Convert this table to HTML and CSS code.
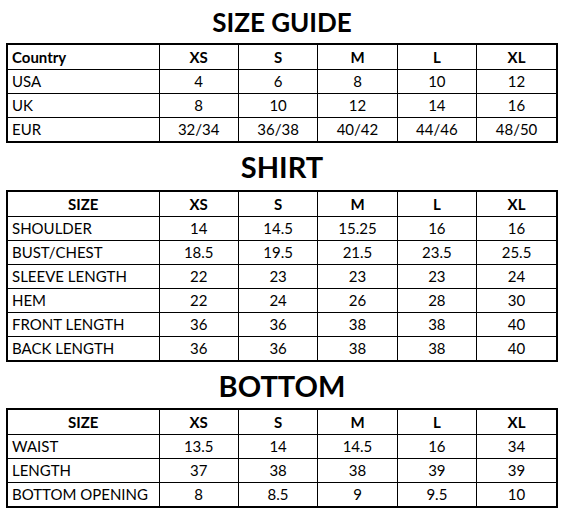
FILE: index.html
```html
<!DOCTYPE html>
<html>
<head>
<meta charset="utf-8">
<title>Size Guide</title>
<link rel="stylesheet" href="styles.css">
</head>
<body>
<div class="page">
  <h1 class="title title-first">SIZE GUIDE</h1>
  <div class="frame">
    <table class="grid">
      <colgroup><col class="c-label"><col><col><col><col><col></colgroup>
      <tr class="head"><th class="label">Country</th><th>XS</th><th>S</th><th>M</th><th>L</th><th>XL</th></tr>
      <tr><td class="label">USA</td><td>4</td><td>6</td><td>8</td><td>10</td><td>12</td></tr>
      <tr><td class="label">UK</td><td>8</td><td>10</td><td>12</td><td>14</td><td>16</td></tr>
      <tr><td class="label">EUR</td><td>32/34</td><td>36/38</td><td>40/42</td><td>44/46</td><td>48/50</td></tr>
    </table>
  </div>

  <h1 class="title title-second">SHIRT</h1>
  <div class="frame">
    <table class="grid">
      <colgroup><col class="c-label"><col><col><col><col><col></colgroup>
      <tr class="head"><th>SIZE</th><th>XS</th><th>S</th><th>M</th><th>L</th><th>XL</th></tr>
      <tr><td class="label">SHOULDER</td><td>14</td><td>14.5</td><td>15.25</td><td>16</td><td>16</td></tr>
      <tr><td class="label">BUST/CHEST</td><td>18.5</td><td>19.5</td><td>21.5</td><td>23.5</td><td>25.5</td></tr>
      <tr><td class="label">SLEEVE LENGTH</td><td>22</td><td>23</td><td>23</td><td>23</td><td>24</td></tr>
      <tr><td class="label">HEM</td><td>22</td><td>24</td><td>26</td><td>28</td><td>30</td></tr>
      <tr><td class="label">FRONT LENGTH</td><td>36</td><td>36</td><td>38</td><td>38</td><td>40</td></tr>
      <tr><td class="label">BACK LENGTH</td><td>36</td><td>36</td><td>38</td><td>38</td><td>40</td></tr>
    </table>
  </div>

  <h1 class="title title-third">BOTTOM</h1>
  <div class="frame">
    <table class="grid">
      <colgroup><col class="c-label"><col><col><col><col><col></colgroup>
      <tr class="head"><th>SIZE</th><th>XS</th><th>S</th><th>M</th><th>L</th><th>XL</th></tr>
      <tr><td class="label">WAIST</td><td>13.5</td><td>14</td><td>14.5</td><td>16</td><td>34</td></tr>
      <tr><td class="label">LENGTH</td><td>37</td><td>38</td><td>38</td><td>39</td><td>39</td></tr>
      <tr><td class="label">BOTTOM OPENING</td><td>8</td><td>8.5</td><td>9</td><td>9.5</td><td>10</td></tr>
    </table>
  </div>
</div>
</body>
</html>
```

FILE: styles.css
```css
html, body {
  margin: 0;
  padding: 0;
  background: #ffffff;
}

.page {
  width: 552px;
  padding-left: 6px;
  font-family: "Lato", "Open Sans", sans-serif;
  color: #000;
}

.title {
  margin: 0;
  display: flex;
  align-items: center;
  justify-content: center;
  font-size: 29px;
  font-weight: 700;
  line-height: 1;
  color: #000;
}

.title-first { height: 43px; font-size: 26px; }
.title-second { height: 47px; }
.title-third { height: 46px; }

.frame {
  border: 2px solid #000;
}

.grid {
  width: 100%;
  border-collapse: collapse;
  table-layout: fixed;
  font-size: 15px;
}

.c-label { width: 151px; }

.grid th,
.grid td {
  border: 1px solid #000;
  padding: 0;
  height: 23px;
  text-align: center;
  vertical-align: middle;
  line-height: 1;
  white-space: nowrap;
}

.grid th {
  font-weight: 700;
  height: 24px;
}

.grid tr:first-child th { border-top: none; }
.grid tr:last-child td { border-bottom: none; }
.grid th:first-child,
.grid td:first-child { border-left: none; }
.grid th:last-child,
.grid td:last-child { border-right: none; }

.grid .label {
  text-align: left;
  padding-left: 4px;
}
```
